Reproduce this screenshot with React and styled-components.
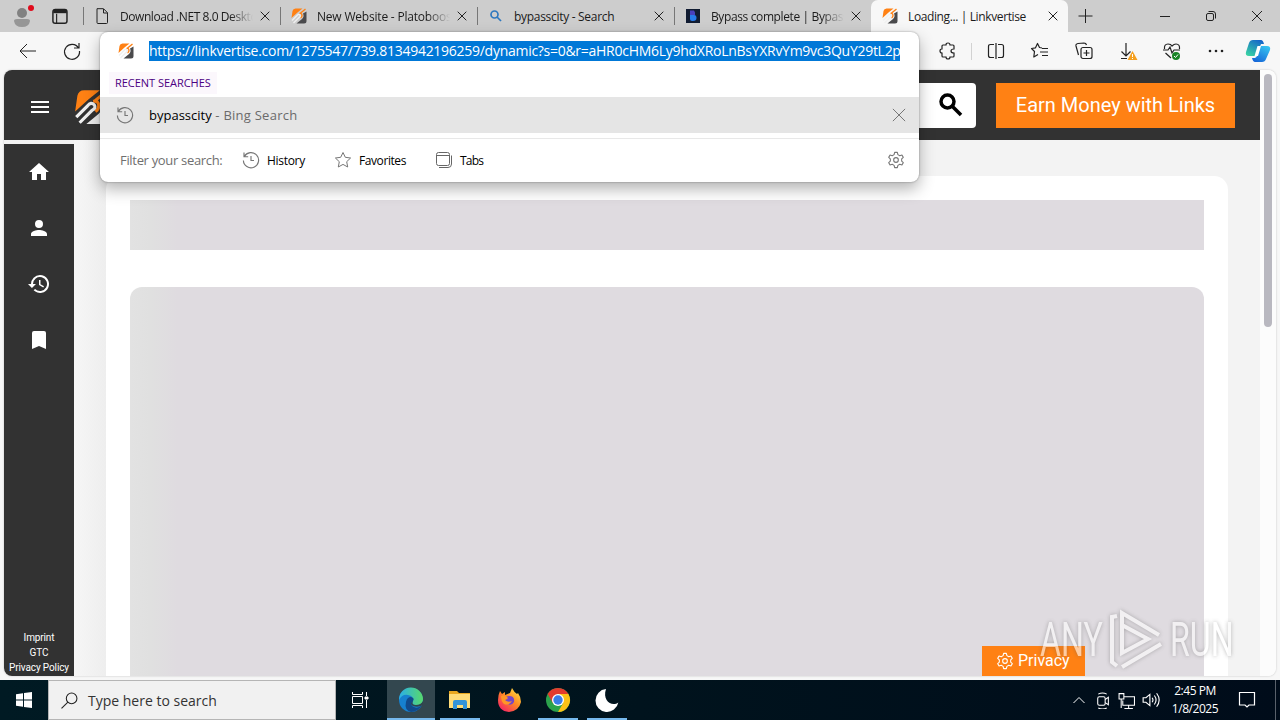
import styled, { createGlobalStyle } from 'styled-components';

const GlobalStyle = createGlobalStyle`
  * { box-sizing: border-box; }
  body { margin: 0; overflow: hidden; font-family: 'Open Sans', sans-serif; }
  svg { display: block; flex: none; }
`;

const Screen = styled.div`
  position: relative;
  width: 1280px;
  height: 720px;
  display: flex;
  flex-direction: column;
  background: #f7f7f7;
  overflow: hidden;
`;

const Label = styled.span`
  font-size: ${({ size }) => size || 12}px;
  letter-spacing: ${({ gap }) => gap || 0}px;
  color: ${({ tone }) => tone || '#1b1b1b'};
  white-space: pre;
`;

const TabStrip = styled.div`
  height: 32px;
  display: flex;
  background: #cdcdcd;
`;

const TabActions = styled.div`
  width: 83px;
  display: flex;
  align-items: center;
  gap: 17px;
  padding-left: 10px;
`;

const Tab = styled.div`
  width: 197px;
  display: flex;
  align-items: center;
  padding: 0 7px 0 11px;
  background: ${({ active }) => (active ? '#f7f7f7' : 'transparent')};
  border-radius: ${({ active }) => (active ? '7px 7px 0 0' : '0')};
  background-image: ${({ active }) => (active ? 'none' : 'linear-gradient(#777, #777)')};
  background-size: 1px 18px;
  background-position: 0 7px;
  background-repeat: no-repeat;
`;

const TabTitle = styled(Label)`
  flex: 1;
  margin-left: 10px;
  overflow: hidden;
  mask-image: ${({ fade }) => (fade ? 'linear-gradient(90deg, #000 110px, transparent 133px)' : 'none')};
`;

const WindowButtons = styled.div`
  flex: 1;
  display: flex;
  align-items: center;
  justify-content: space-between;
  padding: 0 15px 0 9px;
`;

const CaptionGroup = styled.div`
  display: flex;
  align-items: center;
  gap: 30px;
`;

const Toolbar = styled.div`
  height: 38px;
  display: flex;
  align-items: center;
  justify-content: space-between;
  padding: 0 9px 0 18px;
`;

const NavGroup = styled.div`
  display: flex;
  gap: 24px;
`;

const ToolGroup = styled.div`
  display: flex;
  align-items: center;
  gap: 24px;
`;

const ToolDivider = styled.i`
  width: 1px;
  height: 17px;
  margin: 0 -10px 0 -11px;
  background: #d2d2d2;
`;

const CopilotIcon = styled.svg`
  margin-left: -5px;
`;

const Viewport = styled.div`
  height: 610px;
  padding: 0 4px 4px;
`;

const Frame = styled.div`
  height: 606px;
  display: flex;
  border-radius: 8px;
  overflow: hidden;
  background: #fcfcfc;
  box-shadow: 0 0 2px #bbb;
`;

const Site = styled.div`
  width: 1256px;
  background: #f3f3f3;
`;

const SiteHeader = styled.header`
  height: 70px;
  display: flex;
  align-items: center;
  padding: 0 25px;
  background: #323232;
`;

const MenuButton = styled.div`
  margin: 4px 23px 0 0;
`;

const Brand = styled.div`
  margin-top: 4px;
`;

const SearchField = styled.div`
  width: 400px;
  height: 45px;
  margin-left: auto;
  display: flex;
  align-items: center;
  justify-content: flex-end;
  padding-right: 13px;
  border-radius: 4px;
  background: #fff;
`;

const EarnButton = styled.button`
  width: 239px;
  height: 45px;
  margin-left: 20px;
  padding: 0;
  border: 0;
  background: #ff8114;
  color: #fff;
  font: 20px Roboto, sans-serif;
`;

const SiteBody = styled.div`
  height: 536px;
  display: flex;
`;

const SideMenu = styled.nav`
  width: 70px;
  height: 532px;
  margin-top: 4px;
  padding-top: 16px;
  display: flex;
  flex-direction: column;
  align-items: center;
  gap: 32px;
  background: #323232;
`;

const LegalLinks = styled.div`
  margin-top: auto;
  padding-bottom: 1px;
  color: #fff;
  font: 10px/15px Roboto, sans-serif;
  letter-spacing: -0.12px;
  text-align: center;
  white-space: nowrap;
`;

const Main = styled.main`
  flex: 1;
  padding: 36px 32px 0;
  background: linear-gradient(90deg, #f6f6f6, #eeeeee 32px, #f3f3f3 33px);
`;

const Card = styled.section`
  height: 500px;
  padding: 24px 24px 0;
  border-radius: 14px 14px 0 0;
  background: #fff;
`;

const Skeleton = styled.div`
  height: ${({ height }) => height}px;
  margin-bottom: 37px;
  border-radius: ${({ rounded }) => (rounded ? '12px 12px 0 0' : 0)};
  background: linear-gradient(90deg, #e2e2e2, #e0e0e0 20px, #dfdbe0 48px);
`;

const ScrollTrack = styled.div`
  width: 16px;
  padding: 4px 4px;
  background: #fcfcfc;
`;

const ScrollThumb = styled.div`
  width: 8px;
  height: 253px;
  border-radius: 4px;
  background: #b9b8c0;
`;

const Suggest = styled.div`
  position: absolute;
  top: 32px;
  left: 100px;
  width: 819px;
  height: 150px;
  border-radius: 8px;
  background: #fff;
  box-shadow: 0 0 2px rgba(0, 0, 0, 0.4), 0 7px 16px rgba(0, 0, 0, 0.3);
`;

const AddressRow = styled.div`
  height: 38px;
  display: flex;
  align-items: center;
  gap: 15px;
  padding: 0 19px 0 18px;
`;

const Selection = styled.div`
  width: 751px;
  height: 20px;
  overflow: hidden;
  background: #0078d7;
  line-height: 19px;
`;

const Recent = styled.div`
  width: 108px;
  height: 22px;
  margin: 2px 0 3px 9px;
  padding-left: 6px;
  line-height: 19px;
  background: #fbf7fc;
`;

const Suggestion = styled.div`
  height: 36px;
  display: flex;
  align-items: center;
  padding: 0 13px 0 16px;
  background: #e5e5e5;
`;

const SuggestionText = styled.div`
  flex: 1;
  margin-left: 15px;
  padding-bottom: 2px;
`;

const Filters = styled.div`
  height: 44px;
  margin-top: 5px;
  display: flex;
  align-items: center;
  padding: 0 14px 1px 20px;
  border-top: 1px solid #e8e8e8;
`;

const FilterItem = styled.div`
  display: flex;
  align-items: center;
  gap: 7px;
  width: ${({ width }) => width}px;
`;

const FilterSettings = styled.div`
  margin-left: auto;
`;

const PrivacyButton = styled.div`
  position: absolute;
  left: 982px;
  top: 646px;
  width: 103px;
  height: 30px;
  display: flex;
  align-items: center;
  gap: 4px;
  padding: 0 0 1px 14px;
  background: #ff8114;
  color: #fff;
  font: 16px Roboto, sans-serif;
`;

const Watermark = styled.div`
  position: absolute;
  left: 1040px;
  top: 608px;
  display: flex;
  align-items: center;
  gap: 6px;
  opacity: 0.6;
  filter: drop-shadow(0 0 2px rgba(90, 90, 90, 0.7));
`;

const WatermarkWord = styled.span`
  width: ${({ width }) => width}px;
  font: 48px/64px Roboto, sans-serif;
  color: #fff;
  transform: scaleX(${({ squeeze }) => squeeze});
  transform-origin: left;
  white-space: nowrap;
`;

const Taskbar = styled.footer`
  height: 40px;
  display: flex;
  background: linear-gradient(90deg, #001a23, #00131d 50%, #000c1a);
`;

const StartButton = styled.div`
  width: 48px;
  display: grid;
  place-items: center;
`;

const TaskSearch = styled.div`
  width: 288px;
  display: flex;
  align-items: center;
  gap: 10px;
  padding-left: 12px;
  border: 1px solid #b5b5b5;
  background: #f1f1f1;
`;

const TaskView = styled.div`
  width: 51px;
  display: grid;
  place-items: center;
  padding-right: 3px;
`;

const TaskButton = styled.div`
  width: 48px;
  margin-right: 1px;
  display: grid;
  place-items: center;
  background: ${({ active }) => (active ? '#33474f' : 'transparent')};
`;

const RunningMark = styled.i`
  grid-area: 1 / 1;
  align-self: end;
  width: ${({ active }) => (active ? 48 : 40)}px;
  height: 2px;
  background: #76b9ed;
`;

const TaskIcon = styled.div`
  grid-area: 1 / 1;
`;

const Tray = styled.div`
  margin-left: auto;
  display: flex;
  align-items: center;
`;

const TrayIcons = styled.div`
  display: flex;
  align-items: center;
  gap: 7px;
`;

const Clock = styled.div`
  width: 70px;
  margin-right: 8px;
  color: #fff;
  font-size: 12px;
  line-height: 18px;
  letter-spacing: -0.45px;
  text-align: center;
  white-space: nowrap;
`;

const DesktopEdge = styled.i`
  align-self: stretch;
  width: 5px;
  margin-left: 19px;
  border-left: 1px solid #59616b;
`;

const Line = ({ size = 16, color = '#222', width = 1, children, box = 16 }) => (
  <svg width={size} height={size} viewBox={`0 0 ${box} ${box}`} fill="none" stroke={color} strokeWidth={width}>
    {children}
  </svg>
);

const Cross = ({ size = 16, color = '#222', reach = 4 }) => (
  <Line size={size} color={color}>
    <path d={`M${reach} ${reach}L${16 - reach} ${16 - reach}M${16 - reach} ${reach}L${reach} ${16 - reach}`} />
  </Line>
);

const LinkLogo = ({ size = 16, dark = '#4a4a4c' }) => (
  <svg width={size} height={size} viewBox="0 0 32 32">
    <path d="M1 20L3 6Q4 1 9 1H23L13 9Z" fill="#ff8114" />
    <path d="M31 7V26Q31 31 26 31H11L22 22Q27 17 24 11Z" fill={dark} />
    <path d="M29 2L18 11M17 11Q22 10 22 15Q22 18 19 20" fill="none" stroke="#ff8114" strokeWidth="2.8" />
    <path d="M2 25L12 15Q15 11 18 14Q20 17 16 19L5 30" fill="none" stroke="#f0f0f0" strokeWidth="2.8" />
  </svg>
);

const HistoryIcon = () => (
  <Line size={18} box={18} color="#767676" width={1.15}>
    <path d="M2 1.5V5.7H6.2M2.3 5.6A7.6 7.6 0 1 1 1.4 9.5M9 5V9.5H12" />
  </Line>
);

const gearPath =
  'M8.5 1.5H11.5L12.1 4L14.2 5.2L16.6 4.5L18.1 7.1L16.3 8.8V11.2L18.1 12.9L16.6 15.5L14.2 14.8L12.1 16L11.5 18.5H8.5L7.9 16L5.8 14.8L3.4 15.5L1.9 12.9L3.7 11.2V8.8L1.9 7.1L3.4 4.5L5.8 5.2L7.9 4Z';

const Gear = ({ size, color }) => (
  <Line size={size} box={20} color={color} width={1.2}>
    <path d={gearPath} strokeLinejoin="round" />
    <circle cx="10" cy="10" r="2.6" />
  </Line>
);

const materialIcons = [
  'M10 20v-6h4v6h5v-8h3L12 3 2 12h3v8z',
  'M12 12a4 4 0 1 0 0-8 4 4 0 0 0 0 8zm0 2c-2.67 0-8 1.34-8 4v2h16v-2c0-2.66-5.33-4-8-4z',
  'M13 3a9 9 0 0 0-9 9H1l3.89 3.89.07.14L9 12H6a7 7 0 1 1 2.06 4.94l-1.42 1.42A9 9 0 1 0 13 3zm-1 5v5l4.28 2.54.72-1.21-3.5-2.08V8z',
  'M17 3H7a2 2 0 0 0-2 2v16l7-3 7 3V5a2 2 0 0 0-2-2z',
];

const favicons = {
  page: (
    <Line>
      <path d="M3 .7H9.5L13.5 4.7V14.5Q13.5 15.5 12.5 15.5H4Q3 15.5 3 14.5ZM9.5 1V5H13.5" />
    </Line>
  ),
  link: <LinkLogo />,
  search: (
    <Line color="#2e78bf" width={1.7}>
      <circle cx="6.5" cy="6.5" r="3.5" />
      <path d="M9 9L13 13" />
    </Line>
  ),
  bypass: (
    <svg width="16" height="16" viewBox="0 0 16 16">
      <path d="M1 1H15V15H1Z" fill="#111c32" />
      <path d="M5 2.5H9Q10.5 4 10 7H5Z" fill="#4940bd" />
      <path d="M5 7H9Q11.5 7 11.5 10Q11.5 13 8 13H7Q5 13 5 11Z" fill="#287bea" />
    </svg>
  ),
};

const tabs = [
  { icon: 'page', title: 'Download .NET 8.0 Desktop', fade: true, gap: -0.43 },
  { icon: 'link', title: 'New Website - Platoboost', fade: true, gap: -0.2 },
  { icon: 'search', title: 'bypasscity - Search', gap: -0.3 },
  { icon: 'bypass', title: 'Bypass complete | Bypass', fade: true, gap: -0.38 },
  { icon: 'link', title: 'Loading... | Linkvertise', active: true, gap: -0.38 },
];

const EdgeLogo = () => (
  <svg width="26" height="26" viewBox="0 0 26 26">
    <defs>
      <linearGradient id="edgeTop">
        <stop stopColor="#2aaee8" />
        <stop offset="1" stopColor="#58d96b" />
      </linearGradient>
    </defs>
    <circle cx="13" cy="13" r="12" fill="#1680cf" />
    <path d="M1 13A12 12 0 0 1 25 12Q25 18 18 18Q13 18 15 14Q16 9 10 8Q4 7 1 13Z" fill="url(#edgeTop)" />
    <path d="M15 14Q11 18 16 20Q20 22 24 18Q20 25 13 25Q6 23 8 15Q9 10 13 10Q17 11 15 14Z" fill="#114a8b" />
    <path d="M15 14Q13 18 18 18Q23 18 25 14V18Q20 21 15 19Q11 17 15 14Z" fill="#31444c" />
  </svg>
);

const ExplorerLogo = () => (
  <svg width="24" height="24" viewBox="0 0 24 24">
    <path d="M1 3H9L11 5H22V20H1Z" fill="#e9a820" />
    <path d="M1 6H22V20H1Z" fill="#ffdc78" />
    <path d="M5 21V14Q5 12 7 12H17Q19 12 19 14V21H15V17H9V21Z" fill="#3393d8" />
  </svg>
);

const FirefoxLogo = () => (
  <svg width="26" height="26" viewBox="0 0 26 26">
    <defs>
      <linearGradient id="fox" x1="1" x2=".2" y2="1">
        <stop stopColor="#fff04a" />
        <stop offset=".5" stopColor="#ff8b23" />
        <stop offset="1" stopColor="#f52167" />
      </linearGradient>
    </defs>
    <path d="M4 4L6 7L9 5L9 8L14 6L16 1Q18 5 21 7L22 6Q25 10 25 15Q23 24 13 25Q2 24 2 13Q2 8 4 4Z" fill="url(#fox)" />
    <path d="M9 10L13 9Q19 9 18 15Q16 19 11 17Q8 15 8 13L12 12Z" fill="#7446c8" />
    <path d="M5 9Q9 7 12 11L9 13Q12 16 16 14Q13 19 8 17Q5 14 5 9Z" fill="#ff9726" />
  </svg>
);

const ChromeLogo = () => (
  <svg width="26" height="26" viewBox="0 0 26 26">
    <circle cx="13" cy="13" r="12" fill="#2ba24c" />
    <path d="M2.6 7A12 12 0 0 1 23.4 7H13L7.8 16Z" fill="#e33b2e" />
    <path d="M23.4 7A12 12 0 0 1 13 25L18.2 16L13 7Z" fill="#fbc116" />
    <circle cx="13" cy="13" r="6" fill="#fff" />
    <circle cx="13" cy="13" r="4.7" fill="#397de8" />
  </svg>
);

const MoonLogo = () => (
  <svg width="26" height="26" viewBox="0 0 26 26">
    <path d="M11.5 2A11.5 11.5 0 1 0 24 15.5A8.6 8.6 0 0 1 11.5 2Z" fill="none" />
    <path d="M12 2A11.5 11.5 0 1 0 24.3 15.5C18 20 8 14 12 2Z" fill="#fff" />
  </svg>
);

const tasks = [
  { name: 'edge', logo: <EdgeLogo />, running: true, active: true },
  { name: 'explorer', logo: <ExplorerLogo />, running: true },
  { name: 'firefox', logo: <FirefoxLogo /> },
  { name: 'chrome', logo: <ChromeLogo />, running: true },
  { name: 'moon', logo: <MoonLogo />, running: true },
];

const BrowserTabs = () => (
  <TabStrip>
    <TabActions>
      <svg width="24" height="24" viewBox="0 0 24 24">
        <circle cx="12" cy="9" r="5" fill="#818181" />
        <path d="M4 17Q4 15 7 15H17Q20 15 20 17Q19 23 12 23Q5 23 4 17Z" fill="#969696" />
        <circle cx="21" cy="4" r="3" fill="#e00b1c" />
      </svg>
      <Line size={18}>
        <path d="M5 6V15" />
        <rect x="1.7" y="2.2" width="12.5" height="12.3" rx="2" strokeWidth="1.3" />
        <path d="M2 4H14" strokeWidth="3" />
      </Line>
    </TabActions>
    {tabs.map((tab) => (
      <Tab active={tab.active} key={tab.title}>
        {favicons[tab.icon]}
        <TabTitle fade={tab.fade} gap={tab.gap}>{tab.title}</TabTitle>
        <Cross reach={3.7} />
      </Tab>
    ))}
    <WindowButtons>
      <Line>
        <path d="M8.5 1V15M1.5 8H15.5" />
      </Line>
      <CaptionGroup>
        <Line>
          <path d="M3 8.5H13" />
        </Line>
        <Line>
          <rect x="3.5" y="5.5" width="7" height="7" rx="1.5" />
          <path d="M5.5 3.5H10Q12.5 3.5 12.5 6V10.5" />
        </Line>
        <Cross reach={3} />
      </CaptionGroup>
    </WindowButtons>
  </TabStrip>
);

const BrowserToolbar = () => (
  <Toolbar>
    <NavGroup>
      <Line size={20} box={20}>
        <path d="M18 10H2M9 3L2 10L9 17" />
      </Line>
      <Line size={20} box={20} width={1.2}>
        <path d="M16.5 7A7.5 7.5 0 1 0 17.5 10M17 2V7H12" />
      </Line>
    </NavGroup>
    <ToolGroup>
      <Line size={20} box={20} width={1.2}>
        <path d="M5 4H8Q8 2 10 2Q12 2 12 4H15Q16 4 16 5V8Q13 8 13 10Q13 12 16 12V15Q16 16 15 16H12Q12 18 10 18Q8 18 8 16H5Q4 16 4 15V12Q2 12 2 10Q2 8 4 8V5Q4 4 5 4Z" />
      </Line>
      <ToolDivider />
      <Line size={20} box={20} width={1.2}>
        <path d="M8 3.5H4.5Q2.5 3.5 2.5 5.5V14.5Q2.5 16.5 4.5 16.5H8M12 3.5H15.5Q17.5 3.5 17.5 5.5V14.5Q17.5 16.5 15.5 16.5H12M10 2V18" />
      </Line>
      <Line size={20} box={20} width={1.2}>
        <path d="M12 7L9.5 6.5L7.5 2.5L5.5 6.8L1.5 7.5L4.5 10.5L3.8 16L8 13.5M12 7.5H18M10 11H18M12 14.5H18" strokeLinejoin="round" />
      </Line>
      <Line size={20} box={20} width={1.2}>
        <rect x="7" y="6.5" width="11" height="11" rx="2" />
        <path d="M12.5 9V15M9.5 12H15.5M4.5 14L2 5Q1.5 3 4 2.5L10 2Q12 2 12.5 4" />
      </Line>
      <svg width="20" height="20" viewBox="0 0 20 20">
        <path d="M8 2V15M3.5 10.5L8 15L12.5 10.5M3 17.5H9" fill="none" stroke="#222" strokeWidth="1.2" />
        <path d="M14.5 10L19.5 19H9.5Z" fill="#f5a020" />
        <path d="M14.5 13V16M14.5 17V18" stroke="#fff" />
      </svg>
      <svg width="20" height="20" viewBox="0 0 20 20">
        <path d="M2.5 8Q2 3 6 3Q9 3 10 5Q12 3 14 3Q18 3 17.5 8M1 9H6L8 6L10 12L12 9H18M3.5 12L9 17" fill="none" stroke="#222" strokeWidth="1.2" />
        <circle cx="14" cy="15" r="4" fill="#198426" />
        <path d="M12 15L13.5 16.5L16 13.5" fill="none" stroke="#fff" />
      </svg>
      <svg width="20" height="20" viewBox="0 0 20 20" fill="#222">
        <circle cx="4" cy="10" r="1.3" />
        <circle cx="10" cy="10" r="1.3" />
        <circle cx="16" cy="10" r="1.3" />
      </svg>
      <CopilotIcon width="26" height="26" viewBox="0 0 26 26">
        <defs>
          <linearGradient id="copilotA" x1=".8" x2=".2" y2="1">
            <stop stopColor="#1463ca" />
            <stop offset="1" stopColor="#39d2a5" />
          </linearGradient>
          <linearGradient id="copilotB" x1=".8" x2=".2" y2="1">
            <stop stopColor="#35c3f0" />
            <stop offset="1" stopColor="#1565d8" />
          </linearGradient>
        </defs>
        <path d="M8 2H16Q18 2 19 6H16L11 18H4Q0 18 1 14L4 5Q5 2 8 2Z" fill="url(#copilotA)" />
        <path d="M15 8H22Q26 8 25 12L21 21Q20 24 17 24H10Q8 24 7 20H10Q13 19 15 8Z" fill="url(#copilotB)" />
        <path d="M12.5 8H16L13 18H9.5Z" fill="#fff" />
      </CopilotIcon>
    </ToolGroup>
  </Toolbar>
);

const LinkPage = () => (
  <Site>
    <SiteHeader>
      <MenuButton>
        <svg width="22" height="22" viewBox="0 0 22 22">
          <path d="M2 6H20M2 11H20M2 16H20" stroke="#fff" strokeWidth="2" />
        </svg>
      </MenuButton>
      <Brand>
        <LinkLogo size={36} dark="#eee" />
      </Brand>
      <SearchField>
        <svg width="24" height="24" viewBox="0 0 24 24" fill="none" stroke="#000">
          <circle cx="8.5" cy="8.5" r="6.5" strokeWidth="3.5" />
          <path d="M13.5 13.5L22 22" strokeWidth="3.5" />
        </svg>
      </SearchField>
      <EarnButton>Earn Money with Links</EarnButton>
    </SiteHeader>
    <SiteBody>
      <SideMenu>
        {materialIcons.map((d) => (
          <svg width="24" height="24" viewBox="0 0 24 24" fill="#fff" key={d}>
            <path d={d} />
          </svg>
        ))}
        <LegalLinks>
          <div>Imprint</div>
          <div>GTC</div>
          <div>Privacy Policy</div>
        </LegalLinks>
      </SideMenu>
      <Main>
        <Card>
          <Skeleton height={50} />
          <Skeleton height={389} rounded />
        </Card>
      </Main>
    </SiteBody>
  </Site>
);

const AddressSuggest = () => (
  <Suggest>
    <AddressRow>
      <LinkLogo />
      <Selection>
        <Label size={14} gap={-0.275} tone="#fff">
          https://linkvertise.com/1275547/739.8134942196259/dynamic?s=0&r=aHR0cHM6Ly9hdXRoLnBsYXRvYm9vc3QuY29tL2p
        </Label>
      </Selection>
    </AddressRow>
    <Recent>
      <Label size={11} gap={-0.03} tone="#4b0082">RECENT SEARCHES</Label>
    </Recent>
    <Suggestion>
      <HistoryIcon />
      <SuggestionText>
        <Label size={13} tone="#000">bypasscity</Label>
        <Label size={13} gap={0.25} tone="#6b6b6b"> - Bing Search</Label>
      </SuggestionText>
      <Cross size={14} color="#666" reach={1} />
    </Suggestion>
    <Filters>
      <FilterItem width={122}>
        <Label size={13} gap={-0.32} tone="#6f6f6f">Filter your search:</Label>
      </FilterItem>
      <FilterItem width={92}>
        <HistoryIcon />
        <Label gap={-0.3} tone="#000">History</Label>
      </FilterItem>
      <FilterItem width={101}>
        <Line size={18} box={18} color="#767676">
          <path d="M9 1.5L11.3 6.3L16.6 7L12.7 10.7L13.7 16L9 13.4L4.3 16L5.3 10.7L1.4 7L6.7 6.3Z" strokeLinejoin="round" />
        </Line>
        <Label gap={-0.42} tone="#000">Favorites</Label>
      </FilterItem>
      <FilterItem width={60}>
        <Line size={18} box={18} color="#666">
          <rect x="1.5" y="1.5" width="13" height="13" rx="2" />
          <path d="M1.5 4.5H14.5M4 16.5H13Q16.5 16.5 16.5 13V4.5" />
        </Line>
        <Label gap={-0.75} tone="#000">Tabs</Label>
      </FilterItem>
      <FilterSettings>
        <Gear size={18} color="#767676" />
      </FilterSettings>
    </Filters>
  </Suggest>
);

const WindowsTaskbar = () => (
  <Taskbar>
    <StartButton>
      <svg width="16" height="16" viewBox="0 0 16 16" fill="#fff">
        <path d="M0 2.3L7 1.3V7.5H0ZM8 1.1L16 0V7.5H8ZM0 8.5H7V14.7L0 13.7ZM8 8.5H16V16L8 14.9Z" />
      </svg>
    </StartButton>
    <TaskSearch>
      <Line size={17}>
        <circle cx="10" cy="6" r="5" />
        <path d="M6.5 9.5L.5 15.5" />
      </Line>
      <Label size={14} tone="#333">Type here to search</Label>
    </TaskSearch>
    <TaskView>
      <Line size={18} box={18} color="#fff">
        <path d="M1.5 1V3.5H11.5V1M1.5 17V14.5H11.5V17M1.5 5.5H11.5V12.5H1.5ZM15.5 1V5M15.5 9V17" />
        <path d="M14 6H17V8H14Z" fill="#fff" />
      </Line>
    </TaskView>
    {tasks.map((task) => (
      <TaskButton active={task.active} key={task.name}>
        <TaskIcon>{task.logo}</TaskIcon>
        {task.running && <RunningMark active={task.active} />}
      </TaskButton>
    ))}
    <Tray>
      <TrayIcons>
        <Line color="#fff">
          <path d="M2.5 11L8 5.5L13.5 11" />
        </Line>
        <Line size={17} color="#fff">
          <rect x="3.5" y="4.5" width="7" height="8" rx="1.5" />
          <path d="M10.5 7L13.5 5V12L10.5 10M4 2Q8 0 12 2M4 15Q8 17 12 15" />
        </Line>
        <Line size={17} color="#fff">
          <path d="M6 4.5H15.5V12.5H4.5V8M10 12.5V15M6 15.5H14M1 1.5H5.5V6.5H1ZM3 6.5V15" />
        </Line>
        <Line size={18} color="#fff">
          <path d="M1 6H3.5L7 3V13L3.5 10H1ZM9 6Q10.5 8 9 10M11 4Q14 8 11 12M13 2Q17.5 8 13 14" />
        </Line>
      </TrayIcons>
      <Clock>
        <div>2:45 PM</div>
        <div>1/8/2025</div>
      </Clock>
      <Line size={18} box={18} color="#fff" width={1.2}>
        <path d="M1.5 1.5H16.5V14H11L9 16L7 14H1.5Z" />
      </Line>
      <DesktopEdge />
    </Tray>
  </Taskbar>
);

const App = () => {
  return (
    <Screen>
      <GlobalStyle />
      <BrowserTabs />
      <BrowserToolbar />
      <Viewport>
        <Frame>
          <LinkPage />
          <ScrollTrack>
            <ScrollThumb />
          </ScrollTrack>
        </Frame>
      </Viewport>
      <AddressSuggest />
      <PrivacyButton>
        <Gear size={18} color="#fff" />
        Privacy
      </PrivacyButton>
      <Watermark>
        <WatermarkWord width={63} squeeze={0.67}>ANY</WatermarkWord>
        <svg width="55" height="64" viewBox="0 0 55 64" fill="none" stroke="#fff" strokeWidth="4">
          <path d="M8 8L3 9V54L8 58M13 34V5L50 27M13 20V45L39 31L13 17M13 59L52 36" />
        </svg>
        <WatermarkWord width={65} squeeze={0.67}>RUN</WatermarkWord>
      </Watermark>
      <WindowsTaskbar />
    </Screen>
  );
};

export default App;
